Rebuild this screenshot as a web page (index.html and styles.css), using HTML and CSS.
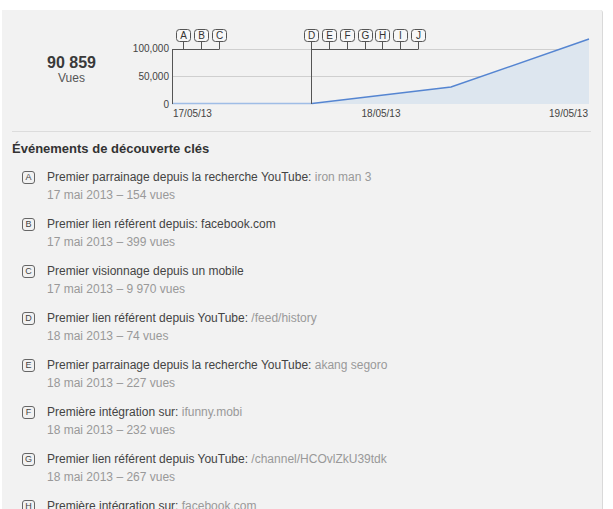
FILE: index.html
```html
<!DOCTYPE html>
<html lang="fr">
<head>
<meta charset="utf-8">
<link rel="stylesheet" href="styles.css">
</head>
<body>
<div class="panel">
  <div class="top">
    <div class="stat">
      <div class="stat-value">90 859</div>
      <div class="stat-label">Vues</div>
    </div>
    <svg class="chart" width="461" height="121" viewBox="0 0 461 121">
      <g class="grid">
        <line x1="31" y1="39.5" x2="448" y2="39.5"/>
        <line x1="31" y1="66.5" x2="448" y2="66.5"/>
      </g>
      <polygon class="area" points="171,94 310,77 448,29 448,94"/>
      <polyline class="flat" points="31,93.5 171,93.5"/>
      <polyline class="data" points="171,93.5 310,77 448,29"/>
      <g class="axis">
        <line x1="31.5" y1="39" x2="31.5" y2="94"/>
        <line x1="170.5" y1="31" x2="170.5" y2="94"/>
        <line x1="31" y1="39.5" x2="78.5" y2="39.5"/>
        <line x1="42.5" y1="31" x2="42.5" y2="39"/>
        <line x1="60.5" y1="31" x2="60.5" y2="39"/>
        <line x1="78.5" y1="31" x2="78.5" y2="39"/>
        <line x1="170" y1="39.5" x2="277.5" y2="39.5"/>
        <line x1="188.5" y1="31" x2="188.5" y2="39"/>
        <line x1="206.5" y1="31" x2="206.5" y2="39"/>
        <line x1="224.5" y1="31" x2="224.5" y2="39"/>
        <line x1="241.5" y1="31" x2="241.5" y2="39"/>
        <line x1="259.5" y1="31" x2="259.5" y2="39"/>
        <line x1="277.5" y1="31" x2="277.5" y2="39"/>
      </g>
      <g class="marks">
        <rect x="35.5" y="19.5" width="14" height="12" rx="3"/>
        <rect x="53.5" y="19.5" width="14" height="12" rx="3"/>
        <rect x="71.5" y="19.5" width="14" height="12" rx="3"/>
        <rect x="163.5" y="19.5" width="14" height="12" rx="3"/>
        <rect x="181.5" y="19.5" width="14" height="12" rx="3"/>
        <rect x="199.5" y="19.5" width="14" height="12" rx="3"/>
        <rect x="217.5" y="19.5" width="14" height="12" rx="3"/>
        <rect x="234.5" y="19.5" width="14" height="12" rx="3"/>
        <rect x="252.5" y="19.5" width="14" height="12" rx="3"/>
        <rect x="270.5" y="19.5" width="14" height="12" rx="3"/>
      </g>
      <g class="mark-text">
        <text x="42.5" y="29">A</text>
        <text x="60.5" y="29">B</text>
        <text x="78.5" y="29">C</text>
        <text x="170.5" y="29">D</text>
        <text x="188.5" y="29">E</text>
        <text x="206.5" y="29">F</text>
        <text x="224.5" y="29">G</text>
        <text x="241.5" y="29">H</text>
        <text x="259.5" y="29">I</text>
        <text x="277.5" y="29">J</text>
      </g>
      <g class="ylabels">
        <text x="28" y="42">100,000</text>
        <text x="28" y="70">50,000</text>
        <text x="28" y="98">0</text>
      </g>
      <g class="xlabels">
        <text x="32" y="107">17/05/13</text>
        <text x="240" y="107" class="mid">18/05/13</text>
        <text x="447" y="107" class="end">19/05/13</text>
      </g>
    </svg>
  </div>
  <div class="divider"></div>
  <h2 class="heading">Événements de découverte clés</h2>
  <ul class="events">
    <li class="event">
      <span class="badge">A</span>
      <div class="event-body">
        <div class="event-title">Premier parrainage depuis la recherche YouTube: <span class="muted">iron man 3</span></div>
        <div class="event-meta">17 mai 2013 – 154 vues</div>
      </div>
    </li>
    <li class="event">
      <span class="badge">B</span>
      <div class="event-body">
        <div class="event-title">Premier lien référent depuis: facebook.com</div>
        <div class="event-meta">17 mai 2013 – 399 vues</div>
      </div>
    </li>
    <li class="event">
      <span class="badge">C</span>
      <div class="event-body">
        <div class="event-title">Premier visionnage depuis un mobile</div>
        <div class="event-meta">17 mai 2013 – 9 970 vues</div>
      </div>
    </li>
    <li class="event">
      <span class="badge">D</span>
      <div class="event-body">
        <div class="event-title">Premier lien référent depuis YouTube: <span class="muted">/feed/history</span></div>
        <div class="event-meta">18 mai 2013 – 74 vues</div>
      </div>
    </li>
    <li class="event">
      <span class="badge">E</span>
      <div class="event-body">
        <div class="event-title">Premier parrainage depuis la recherche YouTube: <span class="muted">akang segoro</span></div>
        <div class="event-meta">18 mai 2013 – 227 vues</div>
      </div>
    </li>
    <li class="event">
      <span class="badge">F</span>
      <div class="event-body">
        <div class="event-title">Première intégration sur: <span class="muted">ifunny.mobi</span></div>
        <div class="event-meta">18 mai 2013 – 232 vues</div>
      </div>
    </li>
    <li class="event">
      <span class="badge">G</span>
      <div class="event-body">
        <div class="event-title">Premier lien référent depuis YouTube: <span class="muted">/channel/HCOvlZkU39tdk</span></div>
        <div class="event-meta">18 mai 2013 – 267 vues</div>
      </div>
    </li>
    <li class="event">
      <span class="badge">H</span>
      <div class="event-body">
        <div class="event-title">Première intégration sur: <span class="muted">facebook.com</span></div>
        <div class="event-meta">18 mai 2013 – 281 vues</div>
      </div>
    </li>
  </ul>
</div>
</body>
</html>
```
FILE: styles.css
```css
html, body {
  margin: 0;
  padding: 0;
  background: #ffffff;
  font-family: "Liberation Sans", Arial, sans-serif;
  overflow: hidden;
}

.panel {
  margin: 10px 0 0 2px;
  width: 600px;
  min-height: 560px;
  background: #f2f2f2;
  border-right: 1px solid #d9d9d9;
  border-top-right-radius: 3px;
}

.top {
  display: flex;
  height: 121px;
}

.stat {
  width: 140px;
  display: flex;
  flex-direction: column;
  align-items: center;
  padding-top: 44px;
  box-sizing: border-box;
}

.stat-value {
  font-size: 16px;
  font-weight: bold;
  line-height: 18px;
  color: #3a3a3a;
}

.stat-label {
  font-size: 12px;
  line-height: 14px;
  color: #555;
  margin-top: -1px;
}

.chart {
  display: block;
  flex: none;
  overflow: visible;
}

.grid line {
  stroke: #cfcfcf;
  stroke-width: 1;
}

.area {
  fill: #dde6ef;
}

.flat {
  fill: none;
  stroke: #9fbde6;
  stroke-width: 1.5;
}

.data {
  fill: none;
  stroke: #5585d1;
  stroke-width: 1.5;
}

.axis line {
  stroke: #555;
  stroke-width: 1;
}

.marks rect {
  fill: #f7f7f7;
  stroke: #555;
  stroke-width: 1;
}

.mark-text text {
  font-family: "Liberation Sans", Arial, sans-serif;
  font-size: 10px;
  fill: #333;
  text-anchor: middle;
}

.ylabels text {
  font-family: "Liberation Sans", Arial, sans-serif;
  font-size: 10px;
  fill: #444;
  text-anchor: end;
}

.xlabels text {
  font-family: "Liberation Sans", Arial, sans-serif;
  font-size: 10px;
  fill: #444;
}

.xlabels .mid {
  text-anchor: middle;
}

.xlabels .end {
  text-anchor: end;
}

.divider {
  height: 1px;
  background: #dcdcdc;
  margin: 0 11px 0 10px;
}

.heading {
  margin: 9px 0 0 10px;
  font-size: 13px;
  line-height: 16px;
  font-weight: bold;
  color: #333;
}

.events {
  list-style: none;
  margin: 11px 0 0 0;
  padding: 0 0 0 20px;
}

.event {
  display: flex;
  align-items: flex-start;
  gap: 12px;
  margin-bottom: 11px;
}

.badge {
  flex: none;
  width: 11px;
  height: 11px;
  margin-top: 3px;
  border: 1px solid #666;
  border-radius: 3px;
  font-size: 9px;
  line-height: 11px;
  text-align: center;
  color: #444;
}

.event-body {
  font-size: 12px;
  line-height: 18px;
}

.event-title {
  color: #444;
}

.muted,
.event-meta {
  color: #999;
}
```
